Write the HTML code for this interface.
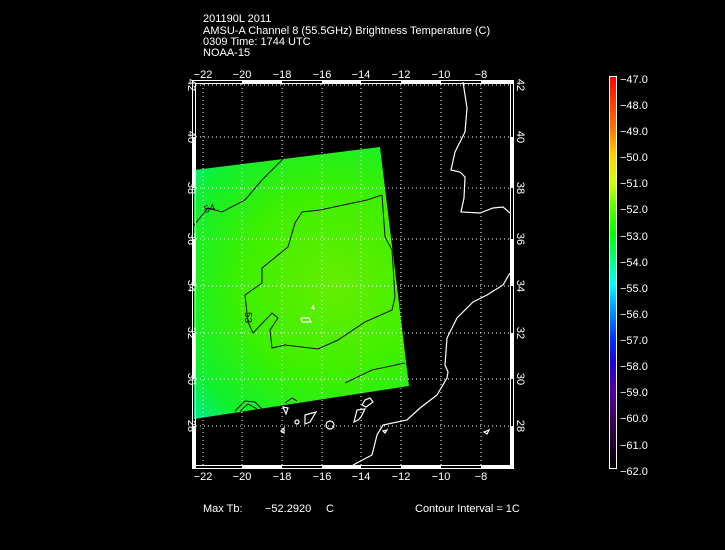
<!DOCTYPE html>
<html><head><meta charset="utf-8"><style>
html,body{margin:0;padding:0;background:#000;width:725px;height:550px;overflow:hidden}
svg{display:block}
text{font-family:"Liberation Sans",sans-serif;fill:#fff;font-size:11px}
</style></head><body>
<svg width="725" height="550" viewBox="0 0 725 550" xmlns="http://www.w3.org/2000/svg">
<defs>
<radialGradient id="g" cx="335" cy="285" r="190" gradientUnits="userSpaceOnUse">
<stop offset="0" stop-color="#66ee00"/>
<stop offset="0.5" stop-color="#3cf000"/>
<stop offset="0.85" stop-color="#10f030"/>
<stop offset="1" stop-color="#00ee80"/>
</radialGradient>
<linearGradient id="cb" x1="0" y1="0" x2="0" y2="1">
<stop offset="0" stop-color="#ff0000"/>
<stop offset="0.13" stop-color="#ff7000"/>
<stop offset="0.2" stop-color="#ffd000"/>
<stop offset="0.27" stop-color="#d0ff00"/>
<stop offset="0.33" stop-color="#60ff00"/>
<stop offset="0.4" stop-color="#00ff00"/>
<stop offset="0.47" stop-color="#00ff80"/>
<stop offset="0.53" stop-color="#00ffff"/>
<stop offset="0.6" stop-color="#0090ff"/>
<stop offset="0.67" stop-color="#0030ff"/>
<stop offset="0.73" stop-color="#2000e0"/>
<stop offset="0.8" stop-color="#5000a0"/>
<stop offset="0.87" stop-color="#400060"/>
<stop offset="1" stop-color="#000000"/>
</linearGradient>
</defs>
<text x="203" y="22">201190L 2011</text>
<text x="203" y="34">AMSU-A Channel 8 (55.5GHz) Brightness Temperature (C)</text>
<text x="203" y="45">0309 Time: 1744 UTC</text>
<text x="203" y="56">NOAA-15</text>

<polygon points="194,170 380,147 409,386 194,419" fill="url(#g)"/>

<g stroke="#fff" stroke-width="1" stroke-dasharray="1,3" fill="none">
<line x1="203" y1="84" x2="203" y2="466"/><line x1="242" y1="84" x2="242" y2="466"/>
<line x1="282" y1="84" x2="282" y2="466"/><line x1="322" y1="84" x2="322" y2="466"/>
<line x1="361" y1="84" x2="361" y2="466"/><line x1="401" y1="84" x2="401" y2="466"/>
<line x1="441" y1="84" x2="441" y2="466"/><line x1="481" y1="84" x2="481" y2="466"/>
<line x1="196" y1="85" x2="510" y2="85"/><line x1="196" y1="137" x2="510" y2="137"/>
<line x1="196" y1="188" x2="510" y2="188"/><line x1="196" y1="239" x2="510" y2="239"/>
<line x1="196" y1="286" x2="510" y2="286"/><line x1="196" y1="333" x2="510" y2="333"/>
<line x1="196" y1="379" x2="510" y2="379"/><line x1="196" y1="426" x2="510" y2="426"/>
</g>

<g stroke="#111" stroke-width="1" fill="none">
<polyline points="194,225 208,208 222,212 245,200 262,180 285,157 308,153"/>
<polyline points="382,195 367,200 320,210 302,212 295,223 288,247 262,268 262,283 245,295 248,322 253,333 272,313 278,318 270,330 272,348 285,345 318,349 338,340 365,322 392,310 395,297 392,250 385,237 382,195"/>
<polyline points="405,363 372,370 345,383"/>
<polyline points="235,411 245,401 255,402 263,410"/>
<polyline points="240,411 248,404 257,409"/>
<polyline points="285,403 292,398 297,401"/>
</g>
<text x="205" y="213" style="font-size:10px;fill:#111" transform="rotate(-15 205 213)">54</text>
<text x="245" y="312" style="font-size:10px;fill:#111" transform="rotate(90 245 312)">53</text>

<g stroke="#fff" stroke-width="1.2" fill="none">
<polyline points="463,82 467,108 465,132 455,152 451,170 460,172 465,177 464,198 461,212 480,213 493,208 503,207 510,213"/>
<polyline points="510,273 503,285 487,295 473,302 457,318 447,338 445,365 448,372 447,378 437,395 420,408 407,420 383,425 377,435 372,455 353,465"/>
<polygon points="370,398 373,402 366,407 362,405 365,400"/>
<polygon points="365,409 361,417 358,420 354,422 357,410"/>
<polygon points="305,415 316,412 310,422 305,424"/>
<circle cx="330" cy="425" r="4"/>
<circle cx="297" cy="422" r="2"/>
<polygon points="283,407 288,408 286,414"/>
<polygon points="281,431 284,428 284,433"/>
<polygon points="301,318 309,318 311,322 302,322"/>
<polygon points="313,306 314,309 312,308"/>
<polygon points="383,431 387,430 385,433"/>
<polygon points="484,432 489,430 487,434"/>
</g>

<g stroke="#fff" fill="none" stroke-width="1">
<rect x="192.5" y="80.5" width="321" height="388"/>
<rect x="195.5" y="83.5" width="315" height="382"/>
</g>
<g fill="#fff">
<rect x="242" y="80" width="40" height="4"/><rect x="322" y="80" width="39" height="4"/>
<rect x="401" y="80" width="40" height="4"/><rect x="481" y="80" width="33" height="4"/>
<rect x="242" y="465" width="40" height="4"/><rect x="322" y="465" width="39" height="4"/>
<rect x="401" y="465" width="40" height="4"/><rect x="481" y="465" width="33" height="4"/>
<rect x="192" y="137" width="4" height="51"/><rect x="192" y="239" width="4" height="47"/>
<rect x="192" y="333" width="4" height="46"/><rect x="192" y="426" width="4" height="43"/>
<rect x="510" y="137" width="4" height="51"/><rect x="510" y="239" width="4" height="47"/>
<rect x="510" y="333" width="4" height="46"/><rect x="510" y="426" width="4" height="43"/>
</g>

<g text-anchor="middle">
<text x="203" y="78">−22</text><text x="242" y="78">−20</text><text x="282" y="78">−18</text><text x="322" y="78">−16</text>
<text x="361" y="78">−14</text><text x="401" y="78">−12</text><text x="441" y="78">−10</text><text x="481" y="78">−8</text>
<text x="203" y="480">−22</text><text x="242" y="480">−20</text><text x="282" y="480">−18</text><text x="322" y="480">−16</text>
<text x="361" y="480">−14</text><text x="401" y="480">−12</text><text x="441" y="480">−10</text><text x="481" y="480">−8</text>
</g>
<g text-anchor="middle">
<text transform="translate(188 85) rotate(90)">42</text><text transform="translate(188 137) rotate(90)">40</text>
<text transform="translate(188 188) rotate(90)">38</text><text transform="translate(188 239) rotate(90)">36</text>
<text transform="translate(188 286) rotate(90)">34</text><text transform="translate(188 333) rotate(90)">32</text>
<text transform="translate(188 379) rotate(90)">30</text><text transform="translate(188 426) rotate(90)">28</text>
<text transform="translate(517 85) rotate(90)">42</text><text transform="translate(517 137) rotate(90)">40</text>
<text transform="translate(517 188) rotate(90)">38</text><text transform="translate(517 239) rotate(90)">36</text>
<text transform="translate(517 286) rotate(90)">34</text><text transform="translate(517 333) rotate(90)">32</text>
<text transform="translate(517 379) rotate(90)">30</text><text transform="translate(517 426) rotate(90)">28</text>
</g>

<rect x="609.5" y="76.5" width="7" height="392" fill="url(#cb)" stroke="#fff"/>
<g>
<text x="620" y="83">−47.0</text><text x="620" y="109">−48.0</text><text x="620" y="135">−49.0</text>
<text x="620" y="161">−50.0</text><text x="620" y="187">−51.0</text><text x="620" y="213">−52.0</text>
<text x="620" y="240">−53.0</text><text x="620" y="266">−54.0</text><text x="620" y="292">−55.0</text>
<text x="620" y="318">−56.0</text><text x="620" y="344">−57.0</text><text x="620" y="370">−58.0</text>
<text x="620" y="396">−59.0</text><text x="620" y="422">−60.0</text><text x="620" y="449">−61.0</text>
<text x="620" y="475">−62.0</text>
</g>

<text x="203" y="512">Max Tb:</text>
<text x="265" y="512">−52.2920</text>
<text x="326" y="512">C</text>
<text x="415" y="512">Contour Interval = 1C</text>
</svg>
</body></html>
